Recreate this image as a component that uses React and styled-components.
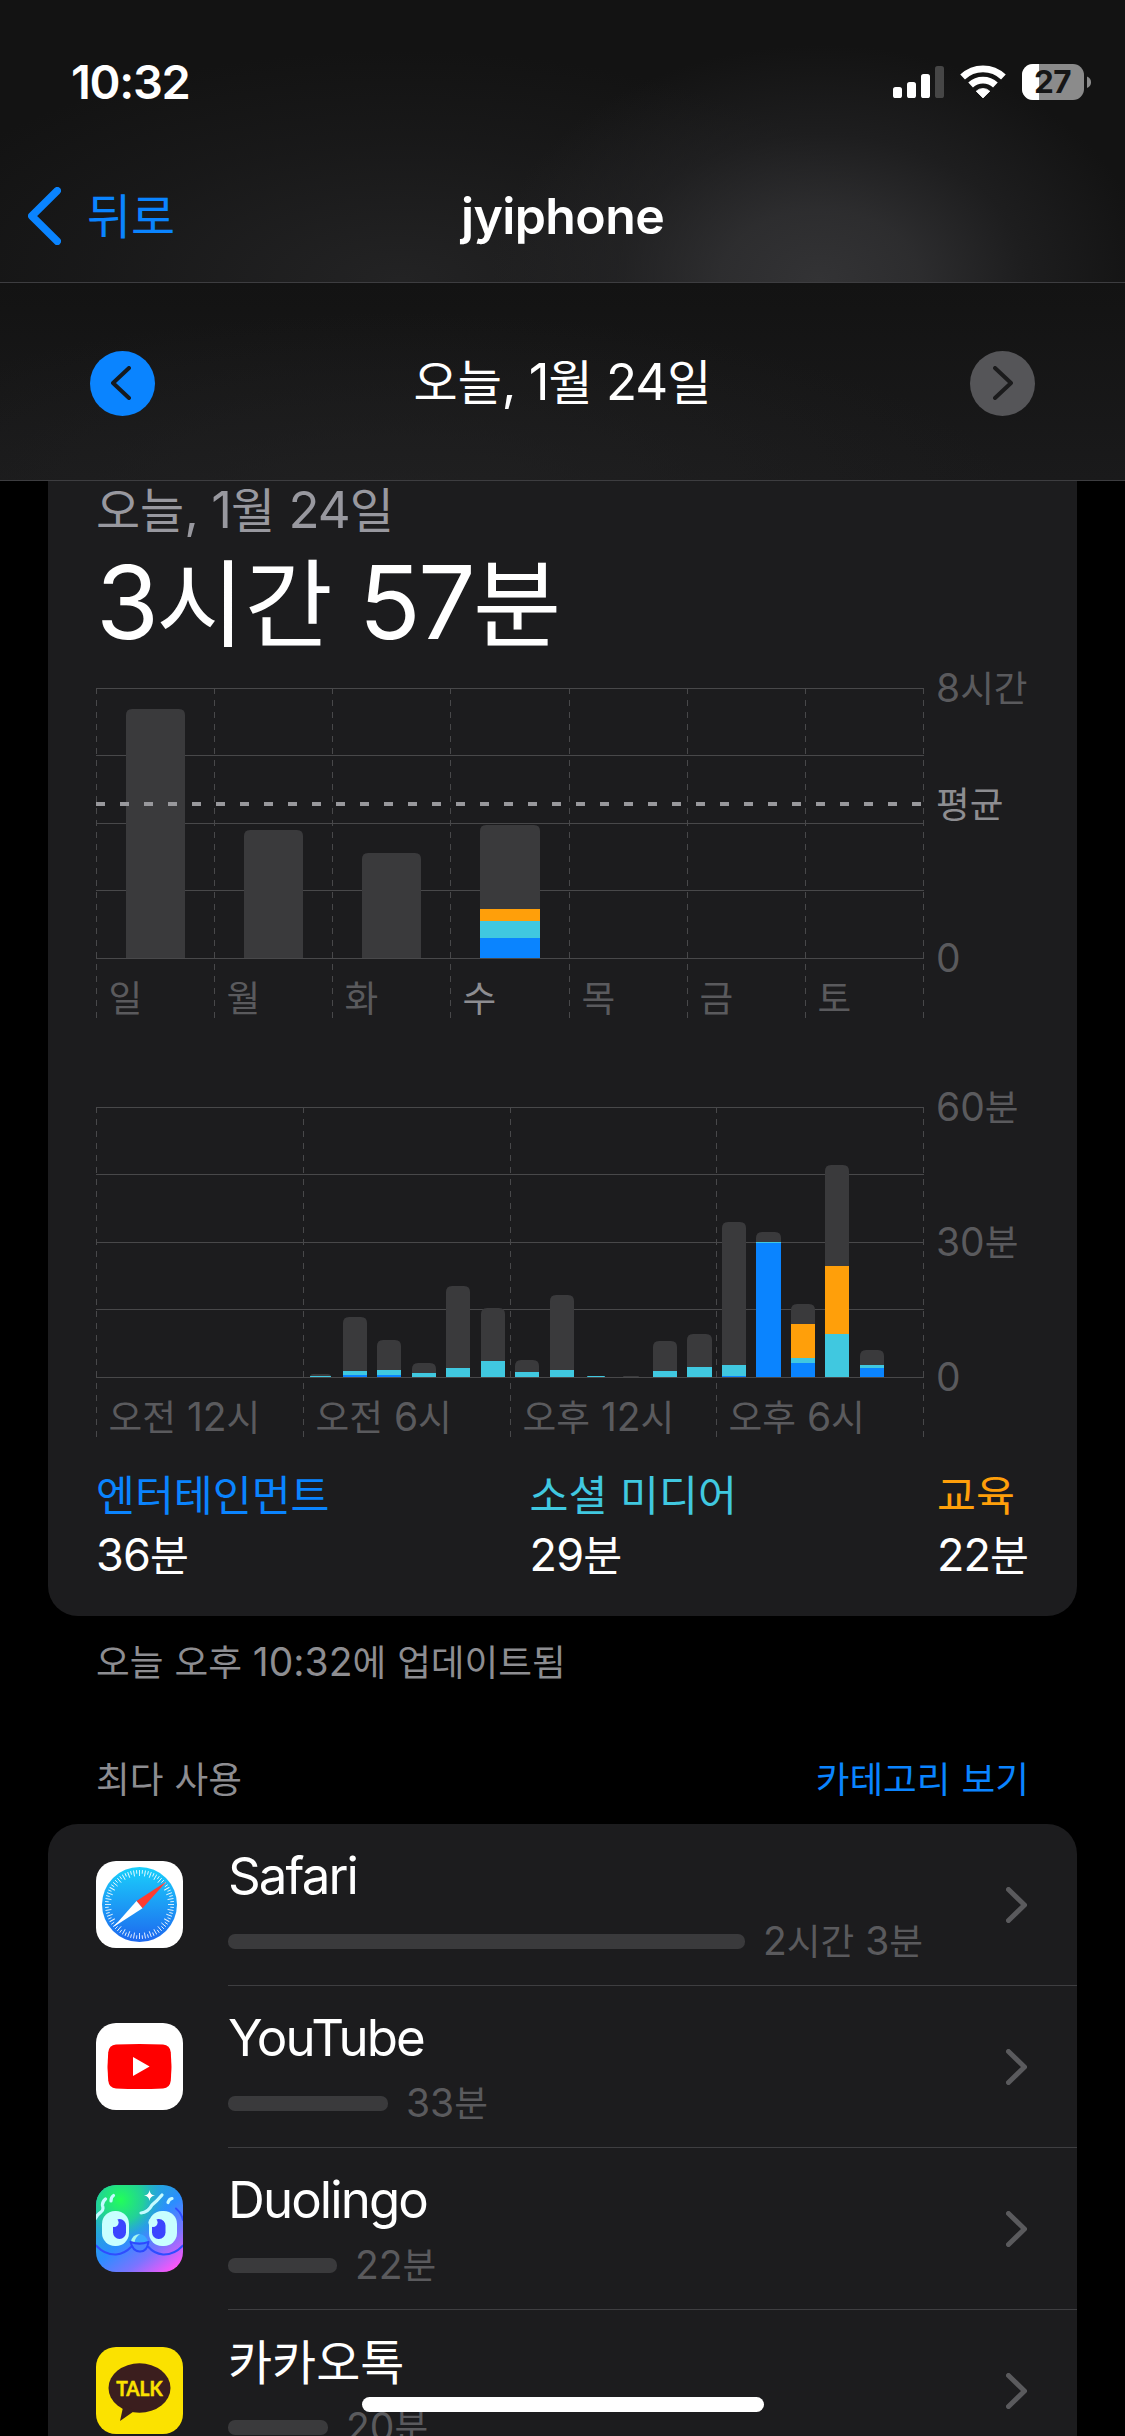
import React from 'react';
import styled, { createGlobalStyle } from 'styled-components';

const C = {
  blue: '#0a84ff',
  teal: '#40c8e0',
  orange: '#ff9f0a',
  card: '#1c1c1e',
  bar: '#3a3a3c',
  grid: '#48484a',
  dim: '#5a5a5d',
  mid: '#8d8d91',
  label: '#98989f',
};

const GlobalStyle = createGlobalStyle`
  html, body { margin: 0; background: #000; }
  * { box-sizing: border-box; }
`;

const Screen = styled.main`
  position: relative;
  width: 1125px;
  height: 2436px;
  overflow: hidden;
  background: #000;
  color: #fff;
  font-family: Inter, "Noto Sans CJK KR", sans-serif;
  -webkit-font-smoothing: antialiased;
`;

const Hangul = styled.span`
  font-family: "Noto Sans CJK KR", sans-serif;
  font-size: 0.94em;
  line-height: 0;
  letter-spacing: 0;
`;

const runs = (text) => text.split(/([가-힣]+)/).filter(Boolean);
const isHangul = (s) => /[가-힣]/.test(s);

const Mixed = ({ children, svg }) =>
  runs(children).map((r, i) =>
    isHangul(r) ? (
      <Hangul key={i} as={svg ? 'tspan' : 'span'}>{r}</Hangul>
    ) : (
      <React.Fragment key={i}>{r}</React.Fragment>
    )
  );

const Line = styled.div`
  font-size: ${(p) => p.$size}px;
  line-height: ${(p) => p.$lh}px;
  color: ${(p) => p.$color || '#fff'};
  font-weight: ${(p) => p.$weight || 400};
  letter-spacing: ${(p) => p.$track || 0}px;
  white-space: pre;
`;

/* ---------- top bars ---------- */

const NavArea = styled.header`
  height: 283px;
  border-bottom: 1px solid #3d3d40;
  background:
    radial-gradient(ellipse 330px 235px at 820px 280px, rgba(51, 51, 53, 1), rgba(49, 49, 51, 0.85) 30%, rgba(40, 40, 42, 0.5) 62%, rgba(20, 20, 20, 0) 100%),
    radial-gradient(ellipse 520px 230px at 400px 280px, rgba(36, 36, 37, 0.95), rgba(30, 30, 31, 0.5) 60%, rgba(20, 20, 20, 0) 100%),
    #131313;
`;

const StatusBar = styled.div`
  height: 148px;
  padding: 64px 34px 0 71px;
  display: flex;
  justify-content: space-between;
  align-items: flex-start;
`;

const NavBar = styled.div`
  height: 134px;
  padding-top: 38px;
  display: grid;
  grid-template-columns: 1fr auto 1fr;
  align-items: start;
`;

const Back = styled.div`
  display: flex;
  align-items: center;
  gap: 26px;
  padding-left: 28px;
`;

const DateBar = styled.section`
  height: 198px;
  border-bottom: 1px solid #3d3d40;
  padding: 0 90px;
  display: flex;
  align-items: center;
  justify-content: space-between;
  background:
    radial-gradient(ellipse 620px 200px at 400px 230px, rgba(34, 34, 35, 0.8), rgba(20, 20, 20, 0) 100%),
    linear-gradient(#131313, #1a1a1b);
`;

const Circle = styled.div`
  width: 65px;
  height: 65px;
  border-radius: 50%;
  display: flex;
  align-items: center;
  justify-content: center;
  background: ${(p) => p.$bg};
  margin-top: 3px;
  padding-right: ${(p) => (p.$left ? 4 : 0)}px;
  padding-left: ${(p) => (p.$left ? 0 : 2)}px;
`;

const Chevron = ({ w, h, stroke, color, left }) => {
  const o = stroke / 2;
  const d = left
    ? `M${w - o} ${o}L${o} ${h / 2}L${w - o} ${h - o}`
    : `M${o} ${o}L${w - o} ${h / 2}L${o} ${h - o}`;
  return (
    <svg width={w} height={h} viewBox={`0 0 ${w} ${h}`} fill="none">
      <path d={d} stroke={color} strokeWidth={stroke} strokeLinecap="round" strokeLinejoin="round" />
    </svg>
  );
};

const StatusIcons = () => (
  <svg width="198" height="38" viewBox="893 64 198 38">
    <rect x="893" y="87" width="9" height="11" rx="2.6" fill="#fff" />
    <rect x="907" y="82" width="9" height="16" rx="2.6" fill="#fff" />
    <rect x="921" y="74" width="9" height="24" rx="2.6" fill="#fff" />
    <rect x="935" y="66" width="9" height="32" rx="2.6" fill="#464646" />
    <g fill="none" stroke="#fff" strokeWidth="6.8">
      <path d="M962.6 77A29.5 29.5 0 0 1 1003.4 77" />
      <path d="M970.6 85A18 18 0 0 1 995.4 85" />
    </g>
    <path d="M983 98L976.2 91.2A9.8 9.8 0 0 1 989.8 91.2Z" fill="#fff" stroke="#fff" strokeWidth="0.8" strokeLinejoin="round" />
    <clipPath id="batt"><rect x="1022" y="64" width="62" height="36" rx="11" /></clipPath>
    <g clipPath="url(#batt)">
      <rect x="1022" y="64" width="62" height="36" fill="#8b8b8b" />
      <rect x="1022" y="64" width="17" height="36" fill="#fff" />
    </g>
    <path d="M1087 76.5Q1091 78 1091 82.3T1087 88Z" fill="#8b8b8b" />
    <text x="1052.6" y="93" textAnchor="middle" fontFamily="Inter, sans-serif" fontSize="31.5" fontWeight="700" fill="#161616" letterSpacing="-0.4">27</text>
  </svg>
);

/* ---------- summary card ---------- */

const Card = styled.section`
  margin: 0 48px;
  padding: 1px 48px 31px;
  border-radius: 0 0 30px 30px;
  background: ${C.card};
`;

const ChartSvg = styled.svg`
  display: block;
  overflow: visible;
  margin-top: ${(p) => p.$top}px;
`;

const AxisText = styled.text`
  font-size: 39px;
  fill: ${(p) => p.$color || C.dim};
`;

const COLORS = { g: C.bar, o: C.orange, t: C.teal, b: C.blue };
const BASE = 290;

function Bar({ id, x, w, segs, r }) {
  const top = segs[0][1];
  const h = BASE - top;
  const rad = Math.min(r, h);
  return (
    <g>
      <clipPath id={id}>
        <path d={`M${x} ${BASE}V${top + rad}Q${x} ${top} ${x + rad} ${top}H${x + w - rad}Q${x + w} ${top} ${x + w} ${top + rad}V${BASE}Z`} />
      </clipPath>
      <g clipPath={`url(#${id})`}>
        {segs.map(([k, y], i) => (
          <rect key={i} x={x} y={y} width={w} height={BASE - y} fill={COLORS[k]} />
        ))}
      </g>
    </g>
  );
}

function Chart({ name, top, columns, bars, radius, xLabels, yLabels, average }) {
  return (
    <ChartSvg $top={top} width="933" height="352" viewBox="0 0 933 352">
      {[20, 87, 155, 222].map((y) => (
        <rect key={y} x="0" y={y} width="828" height="1" fill={C.grid} />
      ))}
      {columns.map((x) => (
        <path key={x} d={`M${x + 0.5} 21V350`} stroke={C.grid} strokeWidth="1" strokeDasharray="6 6" strokeDashoffset="1" />
      ))}
      {bars.map((b, i) => (
        <Bar key={i} id={`${name}${i}`} x={b[0]} w={b[1]} segs={b[2]} r={radius} />
      ))}
      <rect x="0" y="290" width="828" height="1" fill={C.grid} />
      {average && <path d={`M0 ${average}H828`} stroke="#98989c" strokeWidth="4" strokeDasharray="9 15" />}
      {xLabels.map(([t, x, c]) => (
        <AxisText key={t} x={x + 12.5} y="344" $color={c}><Mixed svg>{t}</Mixed></AxisText>
      ))}
      {yLabels.map(([t, y, c]) => (
        <AxisText key={t} x="840" y={y + 14} $color={c}><Mixed svg>{t}</Mixed></AxisText>
      ))}
    </ChartSvg>
  );
}

const WEEK = [
  [30, 59, [['g', 41]]],
  [148, 59, [['g', 162]]],
  [266, 59, [['g', 185]]],
  [384, 60, [['g', 157], ['o', 241], ['t', 253], ['b', 270]]],
];

const HOURS = [
  [214, 21, [['g', 287], ['t', 289]]],
  [247, 24, [['g', 230], ['t', 284], ['b', 288]]],
  [281, 24, [['g', 253], ['t', 283], ['b', 288]]],
  [316, 24, [['g', 276], ['t', 286]]],
  [350, 24, [['g', 199], ['t', 281]]],
  [385, 24, [['g', 221], ['t', 274]]],
  [419, 24, [['g', 273], ['t', 285]]],
  [454, 24, [['g', 208], ['t', 283]]],
  [491, 18, [['t', 289]]],
  [527, 16, [['g', 289]]],
  [557, 24, [['g', 254], ['t', 284]]],
  [591, 25, [['g', 247], ['t', 280]]],
  [626, 24, [['g', 135], ['t', 278], ['b', 289]]],
  [660, 25, [['g', 145], ['t', 155], ['b', 156]]],
  [695, 24, [['g', 217], ['o', 237], ['t', 271], ['b', 276]]],
  [729, 24, [['g', 78], ['o', 179], ['t', 247]]],
  [764, 24, [['g', 263], ['t', 278], ['b', 281]]],
];

const Legend = styled.div`
  display: flex;
  justify-content: space-between;
  margin-top: 26px;
`;

/* ---------- app list ---------- */

const Note = styled.div`
  padding: 23px 96px 0;
`;

const SectionHead = styled.div`
  display: flex;
  justify-content: space-between;
  padding: 71px 96px 22px;
`;

const List = styled.section`
  margin: 0 48px;
  border-radius: 30px 30px 0 0;
  background: ${C.card};
`;

const Row = styled.div`
  height: 162px;
  display: flex;
  padding-left: 48px;
  gap: 45px;
`;

const IconBox = styled.div`
  padding-top: 37px;
  svg { display: block; border-radius: 20px; }
`;

const RowBody = styled.div`
  flex: 1;
  display: flex;
  align-items: center;
  justify-content: space-between;
  padding-right: 50px;
  border-bottom: 1px solid #3e3e41;
`;

const RowText = styled.div`
  align-self: flex-start;
  display: flex;
  flex-direction: column;
  gap: 12px;
  padding-top: 22px;
`;

const Usage = styled.div`
  display: flex;
  align-items: center;
  gap: 18px;
`;

const UsageBar = styled.div`
  width: ${(p) => p.$w}px;
  height: 15px;
  border-radius: 7px;
  background: ${C.bar};
`;

const HomeIndicator = styled.div`
  position: absolute;
  left: 362px;
  bottom: 24px;
  width: 402px;
  height: 15px;
  border-radius: 8px;
  background: #fff;
`;

const SafariIcon = () => (
  <svg width="87" height="87" viewBox="0 0 87 87">
    <defs>
      <linearGradient id="saf" x1="0" y1="0" x2="0" y2="1">
        <stop offset="0" stopColor="#1ad0fb" />
        <stop offset="1" stopColor="#1e68ef" />
      </linearGradient>
    </defs>
    <rect width="87" height="87" fill="#fff" />
    <circle cx="43.5" cy="43.5" r="37.5" fill="url(#saf)" />
    {Array.from({ length: 72 }, (_, i) => (
      <path key={i} d={`M43.5 9V${i % 2 ? 12.6 : 15}`} stroke="#fff" strokeWidth="0.9" opacity="0.9" transform={`rotate(${i * 5} 43.5 43.5)`} />
    ))}
    <path d="M70.5 20.5L40.5 40L46.5 47.2Z" fill="#ff3b30" />
    <path d="M17.5 66L40.5 40L46.5 47.2Z" fill="#fff" />
  </svg>
);

const YouTubeIcon = () => (
  <svg width="87" height="87" viewBox="0 0 87 87">
    <rect width="87" height="87" fill="#fff" />
    <path d="M20 21.6Q43.5 20.4 67 21.6Q74 22 74.8 29.5Q76.2 43.5 74.8 57.5Q74 65 67 65.4Q43.5 66.6 20 65.4Q13 65 12.2 57.5Q10.8 43.5 12.2 29.5Q13 22 20 21.6Z" fill="#f00" />
    <path d="M37 34V53L53.6 43.5Z" fill="#fff" />
  </svg>
);

const DuolingoIcon = () => (
  <svg width="87" height="87" viewBox="0 0 87 87">
    <defs>
      <linearGradient id="duo" x1="0.25" y1="0.1" x2="0.95" y2="1">
        <stop offset="0" stopColor="#1fb5c0" />
        <stop offset="0.42" stopColor="#2c8dff" />
        <stop offset="0.68" stopColor="#7a74ff" />
        <stop offset="0.95" stopColor="#ff55f8" />
      </linearGradient>
      <radialGradient id="duoG" cx="0.28" cy="0.17" r="0.58">
        <stop offset="0" stopColor="#22ff58" />
        <stop offset="0.45" stopColor="#22d98c" stopOpacity="0.85" />
        <stop offset="1" stopColor="#2590ff" stopOpacity="0" />
      </radialGradient>
    </defs>
    <rect width="87" height="87" fill="url(#duo)" />
    <rect width="87" height="87" fill="url(#duoG)" />
    <g fill="none" stroke="#2f4dff" strokeWidth="2" strokeLinecap="round">
      <path d="M0 60.5Q9 70 20 69.5Q29 68.5 35 62" />
      <path d="M87 60.5Q78 70 67 69.5Q58 68.5 52.5 62" />
      <path d="M80 23.5Q85.5 28 87 35" />
    </g>
    <g fill="none" stroke="#c4fbff" strokeWidth="3.2" strokeLinecap="round" strokeLinejoin="round">
      <path d="M-1 34Q1 30 5 27Q8 25 6.5 20.5Q6 17 9.5 14" />
      <path d="M15 16Q15 12 17.5 10.5" />
      <path d="M45 28Q52 27.5 56 20Q61 16 66 10" />
      <path d="M72 17.5Q73 14 76 13.5" />
    </g>
    <path d="M53.5 5Q54 10 59 10.5Q54 11 53.5 16Q53 11 48 10.5Q53 10 53.5 5Z" fill="#fff" />
    <rect x="6" y="26" width="27" height="35" rx="13" fill="#c8ffff" />
    <rect x="53" y="26" width="28" height="35" rx="13" fill="#c8ffff" />
    <rect x="17" y="34" width="13" height="20" rx="6.5" fill="#3b45ff" />
    <rect x="56" y="34" width="13.5" height="20" rx="6.5" fill="#3b45ff" />
    <circle cx="18" cy="37.5" r="4.6" fill="#c8ffff" />
    <circle cx="57" cy="37.5" r="4.6" fill="#c8ffff" />
    <path d="M35 57Q36 49 43.5 49Q50 49.5 52 57Z" fill="#39a8ff" />
    <path d="M35 57Q36 49.5 44 49Q39.5 52 38.5 57Z" fill="#a5f7ee" />
    <path d="M34.5 56.8Q43.5 60.5 52.5 56.8Q51 67 43.5 66.5Q36.5 66 34.5 56.8Z" fill="#4b86ff" stroke="#2c48ff" strokeWidth="2" strokeLinejoin="round" />
  </svg>
);

const KakaoIcon = () => (
  <svg width="87" height="87" viewBox="0 0 87 87">
    <rect width="87" height="87" fill="#fbe200" />
    <ellipse cx="43.5" cy="41" rx="31" ry="24.7" fill="#3b1e1e" />
    <path d="M27.5 58L24 74L39 63.5Z" fill="#3b1e1e" />
    <text x="43.4" y="49.2" textAnchor="middle" textLength="46.5" lengthAdjust="spacingAndGlyphs" fontFamily="Lato, sans-serif" fontWeight="700" fontSize="21" fill="#fbe200" stroke="#fbe200" strokeWidth="0.5">TALK</text>
  </svg>
);

const APPS = [
  { name: 'Safari', time: '2시간 3분', w: 517, Icon: SafariIcon },
  { name: 'YouTube', time: '33분', w: 160, Icon: YouTubeIcon },
  { name: 'Duolingo', time: '22분', w: 109, Icon: DuolingoIcon },
  { name: '카카오톡', time: '20분', w: 100, Icon: KakaoIcon },
];

const LEGEND = [
  ['엔터테인먼트', '36분', C.blue],
  ['소셜 미디어', '29분', C.teal],
  ['교육', '22분', C.orange],
];

export default function App() {
  return (
    <>
      <GlobalStyle />
      <Screen>
        <NavArea>
          <StatusBar>
            <Line $size={47} $lh={36} $weight={600} $track={-1.3}>10:32</Line>
            <StatusIcons />
          </StatusBar>
          <NavBar>
            <Back>
              <Chevron left w={33} h={58} stroke={7.5} color={C.blue} />
              <Line $size={51} $lh={60} $color={C.blue}><Mixed>뒤로</Mixed></Line>
            </Back>
            <Line $size={50} $lh={60} $weight={600} $track={-0.6}>jyiphone</Line>
          </NavBar>
        </NavArea>
        <DateBar>
          <Circle $left $bg={C.blue}><Chevron left w={20} h={34} stroke={4} color="#151a20" /></Circle>
          <Line $size={51} $lh={60} $track={-1}><Mixed>오늘, 1월 24일</Mixed></Line>
          <Circle $bg="#555558"><Chevron w={20} h={34} stroke={4} color="#1b1b1c" /></Circle>
        </DateBar>

        <Card>
          <Line $size={51} $lh={56} $color={C.label} $track={-1}><Mixed>오늘, 1월 24일</Mixed></Line>
          <Line $size={102} $lh={128} $track={-2.7}><Mixed>3시간 57분</Mixed></Line>
          <Chart
            name="week"
            top={2}
            radius={6}
            bars={WEEK}
            average={136}
            columns={[0, 118, 236, 354, 473, 591, 709, 827]}
            xLabels={[['일', 0], ['월', 118], ['화', 236], ['수', 354, C.mid], ['목', 473], ['금', 591], ['토', 709]]}
            yLabels={[['8시간', 20], ['평균', 136, C.mid], ['0', 290]]}
          />
          <Chart
            name="hour"
            top={67}
            radius={6}
            bars={HOURS}
            columns={[0, 207, 414, 620, 827]}
            xLabels={[['오전 12시', 0], ['오전 6시', 207], ['오후 12시', 414], ['오후 6시', 620]]}
            yLabels={[['60분', 20], ['30분', 155], ['0', 290]]}
          />
          <Legend>
            {LEGEND.map(([label, value, color]) => (
              <div key={label}>
                <Line $size={45} $lh={60} $color={color}><Mixed>{label}</Mixed></Line>
                <Line $size={45} $lh={60} $track={-0.9}><Mixed>{value}</Mixed></Line>
              </div>
            ))}
          </Legend>
        </Card>

        <Note>
          <Line $size={39} $lh={46} $color={C.mid}><Mixed>오늘 오후 10:32에 업데이트됨</Mixed></Line>
        </Note>
        <SectionHead>
          <Line $size={39} $lh={46} $color={C.mid}><Mixed>최다 사용</Mixed></Line>
          <Line $size={39} $lh={46} $color={C.blue}><Mixed>카테고리 보기</Mixed></Line>
        </SectionHead>

        <List>
          {APPS.map(({ name, time, w, Icon }) => (
            <Row key={name}>
              <IconBox><Icon /></IconBox>
              <RowBody>
                <RowText>
                  <Line $size={51} $lh={60} $track={-1.9}><Mixed>{name}</Mixed></Line>
                  <Usage>
                    <UsageBar $w={w} />
                    <Line $size={39} $lh={46} $color={C.dim}><Mixed>{time}</Mixed></Line>
                  </Usage>
                </RowText>
                <Chevron w={21} h={36} stroke={5} color={C.dim} />
              </RowBody>
            </Row>
          ))}
        </List>
        <HomeIndicator />
      </Screen>
    </>
  );
}
